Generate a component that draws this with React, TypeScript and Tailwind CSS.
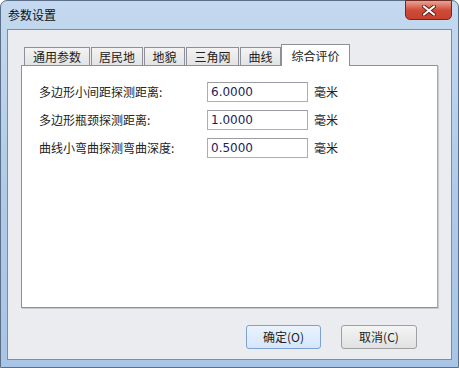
import React, { useState } from 'react';

const tabs = ['通用参数', '居民地', '地貌', '三角网', '曲线'];
const tabWidths = ['w-[66px]', 'w-[52px]', 'w-[41px]', 'w-[53px]', 'w-[41px]'];

const rows = [
  { label: '多边形小间距探测距离:', value: '6.0000' },
  { label: '多边形瓶颈探测距离:', value: '1.0000' },
  { label: '曲线小弯曲探测弯曲深度:', value: '0.5000' },
];

const font = { fontFamily: '"Noto Sans CJK SC", "Liberation Sans", sans-serif' };

const App: React.FC = () => {
  const [values, setValues] = useState(rows.map(r => r.value));

  return (
    <div className="w-[459px] h-[368px] bg-white text-[12px] text-black" style={font}>
      <div className="relative w-full h-full flex flex-col rounded-t-[7px] border border-[#5b6f88] bg-gradient-to-b from-[#c4d9ef] via-[#b0cbe8] to-[#a9c5e6] px-[6px] pb-[7px]">
        {/* Title bar */}
        <div className="h-[28px] flex items-center pl-[1px] text-[12px] leading-none text-[#111]">参数设置</div>

        {/* Close button */}
        <div className="absolute top-[-1px] right-[6px] w-[47px] h-[20px] rounded-b-[5px] border border-[#6e2a24] bg-gradient-to-b from-[#e8a392] via-[#cf4c3a] to-[#c7402c] flex items-center justify-center">
          <svg width="14" height="11" viewBox="0 0 14 11">
            <path d="M2 1.5 L12 9.5 M12 1.5 L2 9.5" stroke="#5a2018" strokeWidth="4" strokeLinecap="round" />
            <path d="M2 1.5 L12 9.5 M12 1.5 L2 9.5" stroke="#ffffff" strokeWidth="2.2" strokeLinecap="round" />
          </svg>
        </div>

        {/* Client area */}
        <div className="flex-1 flex flex-col border border-[#7c8ca2] bg-[#ebecf0] px-[13px] pt-[14px]">
          {/* Tab strip */}
          <div className="flex items-end gap-[1px] pl-[3px] h-[21px]">
            {tabs.map((t, i) => (
              <div
                key={t}
                className={`${tabWidths[i]} h-[18px] border border-b-0 border-[#8d9099] bg-gradient-to-b from-[#f3f3f3] to-[#e3e3e5] flex items-center justify-center text-[#222] leading-none`}
              >
                {t}
              </div>
            ))}
            <div className="relative z-10 -ml-px w-[69px] h-[22px] -mb-px border border-b-0 border-[#8d9099] bg-white flex items-center justify-center text-[#222] leading-none">
              综合评价
            </div>
          </div>

          {/* Panel */}
          <div className="h-[243px] border border-[#8d9099] border-r-[#a9abb0] bg-white pl-[17px] pt-[16px] shadow-[1px_1px_0_#c9cacf]">
            <div className="flex flex-col gap-[8px]">
              {rows.map((r, i) => (
                <div key={r.label} className="flex items-center h-[20px]">
                  <div className="w-[168px] text-[#222]">{r.label}</div>
                  <input
                    value={values[i]}
                    onChange={e => setValues(v => v.map((x, j) => (j === i ? e.target.value : x)))}
                    className="w-[101px] h-[20px] border border-[#abadb3] border-t-[#9a9ca3] bg-white px-[3px] text-[12px] text-[#1c1c5e] outline-none"
                    style={{ fontFamily: '"DejaVu Sans", "Liberation Sans", sans-serif' }}
                  />
                  <span className="ml-[6px] text-[#222]">毫米</span>
                </div>
              ))}
            </div>
          </div>

          {/* Buttons */}
          <div className="flex justify-end gap-[20px] pr-[21px] pt-[17px]">
            <button className="w-[75px] h-[24px] rounded-[3px] border border-[#7da2ce] bg-gradient-to-b from-[#eaf3fd] to-[#d5e6fb] text-[#222] leading-none">
              确定(O)
            </button>
            <button className="w-[76px] h-[24px] rounded-[3px] border border-[#a0a0a0] bg-gradient-to-b from-[#f4f4f4] to-[#e1e1e1] text-[#222] leading-none">
              取消(C)
            </button>
          </div>
        </div>
      </div>
    </div>
  );
};

export default App;
